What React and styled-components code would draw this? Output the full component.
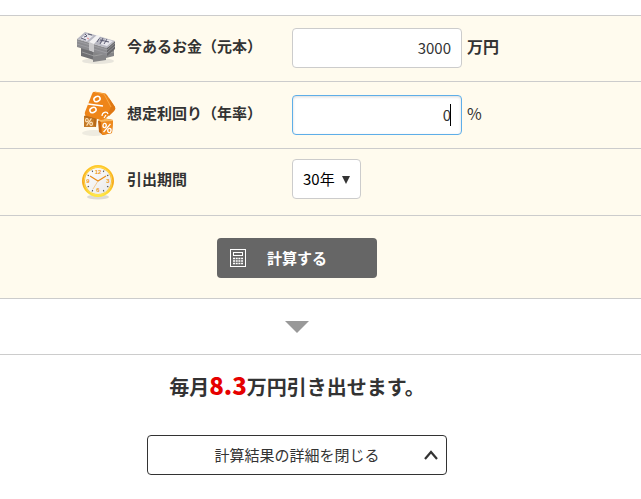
import React, { useState } from "react";
import styled, { createGlobalStyle } from "styled-components";

const Global = createGlobalStyle`
  *, *::before, *::after { box-sizing: border-box; }
  body {
    margin: 0;
    background: #fff;
    color: #333;
    font-family: "Noto Sans CJK JP", sans-serif;
    font-size: 15px;
    line-height: 24px;
  }
  button, input, select { font: inherit; color: inherit; }
`;

const Page = styled.main`
  padding-top: 15px;
`;

const Form = styled.form`
  background: #fffbee;
  border-top: 1px solid #ccc;
`;

const Row = styled.div`
  display: grid;
  grid-template-columns: 40px 154px 1fr;
  column-gap: 11px;
  align-items: center;
  padding: ${(p) => p.$pad} 20px ${(p) => p.$padBottom || p.$pad} 76px;
  border-bottom: 1px solid #ccc;
`;

const Label = styled.label`
  font-weight: 700;
  white-space: nowrap;
  padding-bottom: ${(p) => (p.$centered ? "0" : "4px")};
`;

const Field = styled.div`
  display: flex;
  align-items: center;
  gap: 5px;
`;

const InputBox = styled.div`
  position: relative;
  width: 170px;
`;

const Input = styled.input`
  display: block;
  width: 100%;
  height: 40px;
  padding: 0 10px 2px;
  text-align: right;
  background: #fff;
  border: 1px solid ${(p) => (p.$active ? "#5eaee8" : "#ccc")};
  border-radius: 4px;
  box-shadow: ${(p) => (p.$active ? "inset 0 1px 3px rgba(0, 0, 0, 0.15)" : "none")};
  outline: none;
`;

const Caret = styled.span`
  position: absolute;
  right: 11px;
  top: 9px;
  width: 1px;
  height: 22px;
  background: #000;
`;

const Unit = styled.span`
  font-size: 16px;
  font-weight: ${(p) => (p.$bold ? 700 : 400)};
  padding-bottom: 4px;
`;

const SelectBox = styled.div`
  position: relative;
`;

const Select = styled.select`
  appearance: none;
  display: block;
  width: 69px;
  height: 40px;
  padding: 0 10px;
  color: #000;
  background: #fff;
  border: 1px solid #ccc;
  border-radius: 4px;
`;

const SelectArrow = styled.svg`
  position: absolute;
  right: 11px;
  top: 17px;
  pointer-events: none;
`;

const Centered = styled.div`
  display: flex;
  flex-direction: column;
  align-items: center;
  padding: ${(p) => p.$pad} 47px ${(p) => p.$padBottom || p.$pad} 0;
  border-bottom: ${(p) => (p.$line ? "1px solid #ccc" : "none")};
`;

const Submit = styled.button`
  display: grid;
  grid-template-columns: 16px 1fr 16px;
  align-items: center;
  width: 160px;
  height: 40px;
  padding: 0 13px;
  border: 0;
  border-radius: 4px;
  background: #666;
  color: #fff;
  font-weight: 700;
`;

const Result = styled.p`
  margin: 0 0 32px;
  font-size: 20px;
  font-weight: 700;
  line-height: 32px;
  white-space: nowrap;
`;

const Amount = styled.strong`
  color: #e60000;
  font-size: 24px;
`;

const Toggle = styled.button`
  display: grid;
  grid-template-columns: 16px 1fr 16px;
  align-items: center;
  width: 300px;
  height: 40px;
  padding: 0 7px;
  background: #fff;
  border: 1px solid #333;
  border-radius: 4px;
`;

const Middle = styled.span`
  grid-column: 2;
`;

function MoneyIcon() {
  return (
    <svg width="40" height="36" viewBox="0 0 40 36" aria-hidden="true">
      <ellipse cx="22" cy="31" rx="16" ry="3" fill="#d9d7d0" opacity=".6" />
      <path d="M5 16l13 5v9L5 26z" fill="#707073" />
      <path d="M17 21l21-6v11l-8 2v2l-13 2z" fill="#858587" />
      <path d="M6 22l12 4M18 26l20-4" stroke="#aaa" strokeWidth=".7" />
      <path d="M1 9l30 9v8L1 17z" fill="#8b8b8f" />
      <path d="M31 18l8-7v8l-8 7z" fill="#68686b" />
      <path d="M1 9l8-7 30 9-8 7z" fill="#b8b8c2" />
      <path d="M4 9l6-5 7 2-6 5zM24 14l6-5 7 2-6 5z" fill="#e8e7ed" />
      <path d="M9 4l2 2-3 1M24 7l-3 5M27 8l-3 6M31 9l-3 5M24 10l9 2M5 8l5 2M12 4l4 1" stroke="#5d5d73" strokeWidth="1" fill="none" />
      <path d="M11 8l2 1" stroke="#e6898e" />
      <path d="M1 11l30 9M1 14l30 9M31 20l8-7M31 23l8-7" stroke="#aaaaae" strokeWidth=".6" />
      <path d="M13 12l8-7 4 1-7 8v8l-5-2z" fill="#f2f1f2" />
      <path d="M13 12l5 2v8l-5-2z" fill="#c9c8ca" />
    </svg>
  );
}

function SmallPercent({ transform, color }) {
  return (
    <g transform={transform} fill="none" stroke={color} strokeWidth="1.8">
      <ellipse cx="-3.5" cy="-3" rx="2.2" ry="2.8" />
      <ellipse cx="3.5" cy="3" rx="2.2" ry="2.8" />
      <path d="M4-6L-4 6" />
    </g>
  );
}

function RateIcon() {
  return (
    <svg width="40" height="48" viewBox="0 0 40 48" aria-hidden="true">
      <ellipse cx="18" cy="42" rx="12" ry="3" fill="#dedbd2" opacity=".5" />
      <path d="M8 25l5-2 8 3-1 10-11-1z" fill="#b96a18" />
      <path d="M8 26l10 2v8H8z" fill="#c47a26" />
      <SmallPercent transform="translate(13 31) scale(.6)" color="#ffe6c2" />
      <path d="M22 30l5-3 10 2-1 13-9 2-4-3z" fill="#c76711" />
      <path d="M25 31l12-1-1 12-10 2z" fill="#f08a1b" />
      <path d="M22 29l4-2 11 2v1l-12 1z" fill="#f9b65c" />
      <SmallPercent transform="translate(31 37) rotate(6) scale(.75)" color="#fff" />
      <path d="M19 1Q17 0 16 3L9 21q-1 3 2 4l14 4q3 0 5-2l8-7q2-2 1-4L31 4q-1-2-4-2z" fill="#ee8519" />
      <path d="M33 7l6 9q1 2-1 4l-5 5-1-3 3-6z" fill="#df7814" />
      <path d="M19 1l9 2 7 13" fill="none" stroke="#f9a845" />
      <g fill="none" stroke="#fff" strokeWidth="1.5">
        <ellipse cx="21" cy="8" rx="3.2" ry="2.5" transform="rotate(-25 21 8)" />
        <ellipse cx="17" cy="19" rx="3.2" ry="2.5" transform="rotate(-25 17 19)" />
        <path d="M12 13l15 2" />
        <path d="M26 25c0-4 5-5 6-2M28 27l2-3" strokeWidth="1.2" />
      </g>
    </svg>
  );
}

function ClockIcon() {
  const ticks = [30, 60, 120, 150, 210, 240, 300, 330];
  return (
    <svg width="40" height="44" viewBox="0 -7 40 44" aria-hidden="true">
      <defs>
        <linearGradient id="rim" x1="0" y1="0" x2="0" y2="1">
          <stop offset="0" stopColor="#ffc928" />
          <stop offset=".55" stopColor="#f5a516" />
          <stop offset="1" stopColor="#ffe63b" />
        </linearGradient>
        <linearGradient id="face" x1="0" y1="0" x2="1" y2="1">
          <stop offset="0" stopColor="#fff" />
          <stop offset="1" stopColor="#e8e8e8" />
        </linearGradient>
      </defs>
      <ellipse cx="22" cy="33" rx="11" ry="2.5" fill="#dedbd2" />
      <circle cx="22" cy="17" r="14.5" fill="url(#face)" stroke="url(#rim)" strokeWidth="3" />
      <circle cx="22" cy="17" r="14" fill="none" stroke="#ffe36b" strokeWidth=".7" />
      {ticks.map((angle) => (
        <path key={angle} d="M22 5v1.5" stroke="#555" transform={`rotate(${angle} 22 17)`} />
      ))}
      <g fill="#ef9b24" fontFamily="Liberation Sans, sans-serif" fontSize="6" fontWeight="700" textAnchor="middle">
        <text x="22" y="10">12</text>
        <text x="32" y="19">3</text>
        <text x="22" y="28">6</text>
        <text x="12" y="19">9</text>
      </g>
      <path d="M14 12l8 5 8-5" fill="none" stroke="#e98d18" strokeWidth="1.2" />
      <path d="M22 17l-5 8" stroke="#f3b668" strokeWidth=".7" />
    </svg>
  );
}

function CalculatorIcon() {
  return (
    <svg width="16" height="18" viewBox="0 0 16 18" fill="none" stroke="#fff" aria-hidden="true">
      <rect x=".5" y=".5" width="15" height="17" />
      <rect x="3.5" y="3.5" width="9" height="3" />
      <path d="M3 9.5h10M3 12h10M3 14.5h10" strokeWidth="1.3" strokeDasharray="2 .7" />
    </svg>
  );
}

export default function App() {
  const [principal, setPrincipal] = useState("3000");
  const [rate, setRate] = useState("0");
  return (
    <Page>
      <Global />
      <Form onSubmit={(e) => e.preventDefault()}>
        <Row $pad="12px" $padBottom="13px">
          <MoneyIcon />
          <Label htmlFor="principal">今あるお金（元本）</Label>
          <Field>
            <InputBox>
              <Input id="principal" value={principal} onChange={(e) => setPrincipal(e.target.value)} />
            </InputBox>
            <Unit $bold>万円</Unit>
          </Field>
        </Row>
        <Row $pad="9px">
          <RateIcon />
          <Label htmlFor="rate">想定利回り（年率）</Label>
          <Field>
            <InputBox>
              <Input id="rate" $active value={rate} onChange={(e) => setRate(e.target.value)} />
              <Caret />
            </InputBox>
            <Unit>%</Unit>
          </Field>
        </Row>
        <Row $pad="8px" $padBottom="14px">
          <ClockIcon />
          <Label htmlFor="period" $centered>引出期間</Label>
          <Field>
            <SelectBox>
              <Select id="period" defaultValue="30">
                <option value="10">10年</option>
                <option value="20">20年</option>
                <option value="30">30年</option>
              </Select>
              <SelectArrow width="8" height="8" viewBox="0 0 8 8" aria-hidden="true">
                <path d="M0 0h8L4 8z" fill="#333" />
              </SelectArrow>
            </SelectBox>
          </Field>
        </Row>
        <Centered $pad="22px" $padBottom="20px" $line>
          <Submit type="submit">
            <CalculatorIcon />
            <Middle>計算する</Middle>
          </Submit>
        </Centered>
      </Form>
      <Centered $pad="22px" $padBottom="21px" $line>
        <svg width="24" height="12" viewBox="0 0 24 12" aria-hidden="true">
          <path d="M0 0h24L12 12z" fill="#999" />
        </svg>
      </Centered>
      <Centered $pad="14px">
        <Result>
          毎月<Amount>8.3</Amount>万円引き出せます。
        </Result>
        <Toggle type="button" aria-expanded="true">
          <Middle>計算結果の詳細を閉じる</Middle>
          <svg width="16" height="12" viewBox="0 0 16 12" aria-hidden="true">
            <path d="M2 10l6-7 6 7" fill="none" stroke="#333" strokeWidth="2.2" />
          </svg>
        </Toggle>
      </Centered>
    </Page>
  );
}
